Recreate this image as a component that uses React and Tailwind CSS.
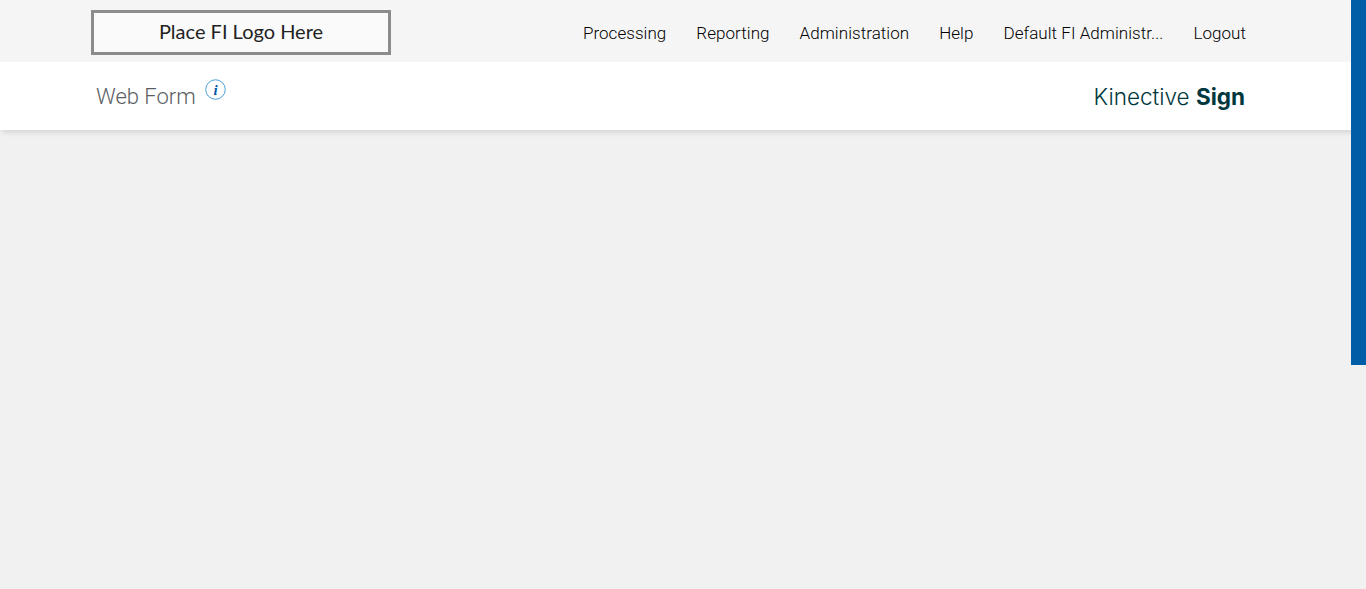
const navItems = ["Processing", "Reporting", "Administration", "Help", "Default FI Administr...", "Logout"];

function InfoIcon() {
  return (
    <svg width="21" height="21" viewBox="0 0 21 21" className="block">
      <circle cx="10.5" cy="10.5" r="9.75" fill="none" stroke="#4a9fd8" strokeWidth="1" />
      <text x="10.5" y="15.5" textAnchor="middle" fill="#005da6" fontSize="15" fontWeight="700" fontStyle="italic" fontFamily="'Liberation Serif', serif">
        i
      </text>
    </svg>
  );
}

export default function App() {
  return (
    <div className="relative h-[589px] overflow-hidden bg-[#f1f1f1] font-['Roboto',sans-serif]">
      <header className="h-[62px] bg-[#f5f5f5]">
        <div className="flex h-full w-[1155px] ml-[91px] items-start justify-between">
          <div className="mt-[10px] flex h-[45px] w-[300px] items-center justify-center border-[3px] border-[#8c8c8c] bg-[#fafafa] pb-[4px] font-['Lato',sans-serif] text-[20px] text-[#222]">
            Place FI Logo Here
          </div>
          <nav className="flex h-full items-center gap-[30px] pt-[6px] text-[17px] font-light tracking-[0.05px] text-black">
            {navItems.map((item) => (
              <a key={item} href="#">
                {item}
              </a>
            ))}
          </nav>
        </div>
      </header>

      <div className="h-[68px] bg-white shadow-[0_4px_6px_-2px_rgba(0,0,0,0.14)]">
        <div className="flex h-full w-[1155px] ml-[91px] items-center justify-between">
          <div className="flex items-start self-start mt-[17px] pl-[5px]">
            <h1 className="text-[22px] leading-[28px] mt-[4px] font-light text-[#5a5e63]">Web Form</h1>
            <span className="ml-[9px]">
              <InfoIcon />
            </span>
          </div>
          <div className="mr-[1px] pt-[2px] font-['Inter',sans-serif] text-[22.5px] font-light text-[#00383d]">
            Kinective <span className="font-bold">Sign</span>
          </div>
        </div>
      </div>

      {/* blue strip over the right edge */}
      <div className="absolute top-0 right-0 h-[365px] w-[15px] bg-[#005da6]" />
    </div>
  );
}
